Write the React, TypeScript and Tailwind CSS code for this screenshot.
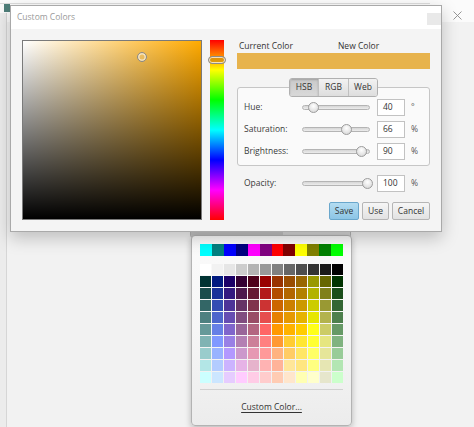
import React from "react";

const TOP = ["#00ffff", "#008080", "#0000ff", "#000080", "#ff00ff", "#800080", "#ff0000", "#800000", "#ffff00", "#808000", "#008000", "#00ff00"];

const RAW = [
  255, 255, 255, 242, 242, 242, 230, 230, 230, 204, 204, 204, 179, 179, 179, 153, 153, 153, 128, 128, 128, 102, 102, 102, 77, 77, 77, 51, 51, 51, 26, 26, 26, 0, 0, 0,
  0, 51, 51, 0, 26, 128, 26, 0, 104, 51, 0, 51, 77, 0, 26, 153, 0, 0, 153, 51, 0, 153, 77, 0, 153, 102, 0, 153, 153, 0, 102, 102, 0, 0, 51, 0,
  26, 77, 77, 26, 51, 153, 51, 26, 128, 77, 26, 77, 102, 26, 51, 179, 26, 26, 179, 77, 0, 179, 102, 0, 179, 128, 0, 179, 179, 0, 128, 128, 26, 26, 77, 26,
  51, 102, 102, 51, 77, 179, 77, 51, 153, 102, 51, 102, 128, 51, 77, 204, 51, 51, 204, 102, 0, 204, 128, 0, 204, 153, 0, 204, 204, 0, 153, 153, 51, 51, 102, 51,
  77, 128, 128, 77, 102, 204, 102, 77, 179, 128, 77, 128, 153, 77, 102, 230, 77, 77, 230, 128, 0, 230, 153, 0, 230, 179, 0, 230, 230, 0, 179, 179, 77, 77, 128, 77,
  102, 153, 153, 102, 128, 230, 128, 102, 204, 153, 102, 153, 179, 102, 128, 255, 102, 102, 255, 153, 0, 255, 179, 0, 255, 204, 0, 255, 255, 26, 204, 204, 102, 102, 153, 102,
  128, 179, 179, 128, 153, 255, 153, 128, 230, 179, 128, 179, 204, 128, 153, 255, 128, 128, 255, 153, 51, 255, 204, 51, 255, 230, 51, 255, 255, 51, 230, 230, 128, 128, 179, 128,
  153, 204, 204, 153, 179, 255, 179, 153, 255, 204, 153, 204, 230, 153, 179, 255, 153, 153, 255, 179, 128, 255, 204, 102, 255, 230, 102, 255, 255, 102, 230, 230, 153, 153, 204, 153,
  179, 230, 230, 179, 204, 255, 204, 179, 255, 230, 179, 230, 230, 179, 204, 255, 179, 179, 255, 179, 153, 255, 230, 153, 255, 230, 128, 255, 255, 128, 230, 230, 179, 179, 230, 179,
  204, 255, 255, 204, 230, 255, 230, 204, 255, 255, 204, 255, 255, 204, 230, 255, 204, 204, 255, 204, 179, 255, 230, 204, 255, 255, 179, 255, 255, 204, 230, 230, 204, 204, 255, 204,
];

const GRID: string[] = [];
for (let i = 0; i < RAW.length; i += 3) GRID.push(`rgb(${RAW[i]},${RAW[i + 1]},${RAW[i + 2]})`);

function Slider({ v }: { v: number }) {
  return (
    <div className="relative h-[12px] w-[68px] flex items-center">
      <div className="h-[5px] w-full rounded-full border border-[#b4b4b4] bg-gradient-to-b from-[#d6d6d6] to-[#ececec]" />
      <div
        className="absolute top-[0.5px] h-[11px] w-[11px] rounded-full border border-[#9c9c9c] bg-[radial-gradient(circle_at_50%_35%,#ffffff,#e4e4e4_60%,#cfcfcf)]"
        style={{ left: 5 + v * 60 - 5.5 }}
      />
    </div>
  );
}

function Row({ label, v, value, unit }: { label: string; v: number; value: string; unit: string }) {
  return (
    <div className="flex h-[22px] items-center">
      <div className="w-[58px] text-[#3a3a3a]">{label}</div>
      <Slider v={v} />
      <div className="ml-[7px] flex h-[17px] w-[28px] items-center border border-[#c2c2c2] bg-white pl-[5px] text-[#333]">{value}</div>
      <div className="ml-[6px] text-[#555]">{unit}</div>
    </div>
  );
}

export default function App() {
  return (
    <div className="relative h-[427px] w-[474px] overflow-hidden bg-[#f2f2f2] font-['Open_Sans','Noto_Sans',sans-serif] text-[8.5px] leading-none">
      {/* underlying window */}
      <div className="absolute left-0 top-0 h-[22px] w-full bg-[#fbfbfb]" />
      <div className="absolute left-0 top-[3px] h-px w-[430px] bg-[#dcdcdc]" />
      <div className="absolute left-[4px] top-[4px] h-[8px] w-[6px] bg-[#4f7f7a]" />
      <div className="absolute left-[6px] top-[13px] h-[414px] w-px bg-[#d6d6d6]" />
      <div className="absolute left-0 top-[13px] h-[414px] w-[6px] bg-[#ececec]" />
      <svg className="absolute left-[453px] top-[11px]" width="9" height="9" viewBox="0 0 9 9">
        <path d="M0.5 0.5 L8.5 8.5 M8.5 0.5 L0.5 8.5" stroke="#8a8a8a" strokeWidth="0.9" />
      </svg>

      {/* color picker button strip */}
      <div className="absolute left-[190px] top-[228px] flex h-[10px] w-[161px] overflow-hidden rounded-[3px] border border-[#b8b8b8] bg-[#dedede]">
        <div className="h-full w-[92px] bg-[#c9c9c9]" />
      </div>

      {/* popup palette */}
      <div className="absolute left-[191px] top-[235px] flex h-[191px] w-[161px] flex-col rounded-[4px] border border-[#b3b3b3] bg-gradient-to-b from-[#fafafa] via-[#f6f6f6] to-[#ececec] pl-[8px] pt-[8px] shadow-[0_2px_6px_rgba(0,0,0,0.25)]">
        <div className="grid w-[143px] grid-cols-12">
          {TOP.map((c, i) => (
            <div key={i} className="h-[12px]" style={{ backgroundColor: c }} />
          ))}
        </div>
        <div className="mt-[8px] grid w-[143px] grid-cols-[repeat(12,11px)] gap-px">
          {GRID.map((c, i) => (
            <div key={i} className="h-[11px]" style={{ backgroundColor: c }} />
          ))}
        </div>
        <div className="mt-[6px] h-px w-[143px] bg-[#d0d0d0]" />
        <div className="mt-[13px] w-[143px] text-center text-[#333] underline underline-offset-[1.5px]">Custom Color...</div>
      </div>

      {/* dialog */}
      <div className="absolute left-[10px] top-[5px] flex h-[227px] w-[432px] flex-col border border-[#a9a9a9] bg-[#f4f4f4] shadow-[0_6px_16px_rgba(0,0,0,0.22)]">
        <div className="relative flex h-[23px] items-center bg-white pl-[6px] text-[#9a9a9a]">
          <span className="text-[8.5px]">Custom Colors</span>
          <div className="absolute right-0 top-[7px] h-[12px] w-[14px] bg-[#e9e9e9]" />
        </div>
        <div className="flex pl-[11px] pt-[11px]">
          {/* SB square */}
          <div className="relative h-[180px] w-[180px] border border-[#7a7a7a] bg-[linear-gradient(to_bottom,rgba(0,0,0,0),#000),linear-gradient(to_right,#fff,#ffaa00)]">
            <div className="absolute left-[114px] top-[11px] h-[10px] w-[10px] rounded-full border border-[#8a8a8a] bg-white/10 shadow-[inset_0_0_0_1.5px_rgba(255,255,255,0.6)]" />
          </div>
          {/* hue bar */}
          <div className="relative ml-[8px] h-[180px] w-[14px] bg-[linear-gradient(to_bottom,#f00,#ff0_16.67%,#0f0_33.33%,#0ff_50%,#00f_66.67%,#f0f_83.33%,#f00)]">
            <div className="absolute -left-[2px] top-[16px] h-[8px] w-[18px] rounded-full border border-[#8c8c8c] bg-[#c98a10]/60 shadow-[inset_0_0_0_1px_rgba(255,255,255,0.7)]" />
          </div>
          {/* right column */}
          <div className="ml-[13px] flex w-[193px] flex-col">
            <div className="flex h-[13px] items-center text-[#333]">
              <span className="ml-[2px]">Current Color</span>
              <span className="ml-[45px]">New Color</span>
            </div>
            <div className="flex h-[16px] w-full">
              <div className="h-full flex-1 bg-[#e7b34d]" />
              <div className="h-full flex-1 bg-[#e7b34d]" />
            </div>
            <div className="relative z-10 mt-[9px] flex h-[19px] self-center overflow-hidden rounded-[3px] border border-[#b0b0b0] text-[#333]">
              <div className="flex w-[28px] items-center justify-center bg-gradient-to-b from-[#c9c9c9] to-[#d9d9d9] shadow-[inset_0_1px_2px_rgba(0,0,0,0.2)]">HSB</div>
              <div className="flex w-[30px] items-center justify-center border-l border-[#c0c0c0] bg-gradient-to-b from-[#f2f2f2] to-[#dedede]">RGB</div>
              <div className="flex w-[29px] items-center justify-center border-l border-[#c0c0c0] bg-gradient-to-b from-[#f2f2f2] to-[#dedede]">Web</div>
            </div>
            <div className="-mt-[10px] flex h-[79px] flex-col rounded-[3px] border border-[#c6c6c6] bg-[#fafafa] pl-[6px] pt-[8px]">
              <Row label="Hue:" v={40 / 360} value="40" unit="°" />
              <Row label="Saturation:" v={0.66} value="66" unit="%" />
              <Row label="Brightness:" v={0.9} value="90" unit="%" />
            </div>
            <div className="mt-[6px] pl-[7px]">
              <Row label="Opacity:" v={1} value="100" unit="%" />
            </div>
            <div className="mt-[8px] flex justify-end gap-[3px] text-[#333]">
              <div className="flex h-[18px] w-[30px] items-center justify-center rounded-[2px] border border-[#6aa7cc] bg-gradient-to-b from-[#b3dcf1] to-[#8cc5e6]">Save</div>
              <div className="flex h-[18px] w-[27px] items-center justify-center rounded-[2px] border border-[#b5b5b5] bg-gradient-to-b from-[#f6f6f6] to-[#e2e2e2]">Use</div>
              <div className="flex h-[18px] w-[38px] items-center justify-center rounded-[2px] border border-[#b5b5b5] bg-gradient-to-b from-[#f6f6f6] to-[#e2e2e2]">Cancel</div>
            </div>
          </div>
        </div>
      </div>
    </div>
  );
}
